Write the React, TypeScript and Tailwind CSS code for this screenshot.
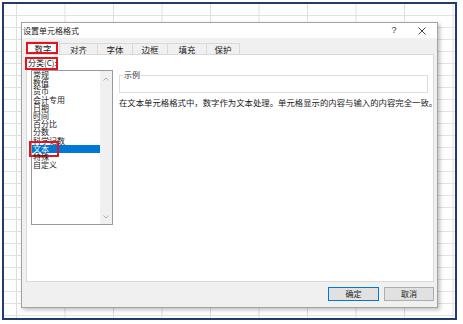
import React from "react";

const FONT = { fontFamily: '"Noto Sans CJK SC", "Noto Sans", sans-serif' };

const tabs: { label: string; w: string }[] = [
  { label: "数字", w: "w-[34px]" },
  { label: "对齐", w: "w-[38px]" },
  { label: "字体", w: "w-[35px]" },
  { label: "边框", w: "w-[35px]" },
  { label: "填充", w: "w-[39px]" },
  { label: "保护", w: "w-[33px]" },
];

const items = [
  "常规",
  "数值",
  "货币",
  "会计专用",
  "日期",
  "时间",
  "百分比",
  "分数",
  "科学记数",
  "文本",
  "特殊",
  "自定义",
];

function Chevron({ up }: { up?: boolean }) {
  return (
    <svg width="6" height="4" viewBox="0 0 6 4" className="block">
      <path
        d={up ? "M0.5 3.5 L3 1 L5.5 3.5" : "M0.5 0.5 L3 3 L5.5 0.5"}
        fill="none"
        stroke="#a6a6a6"
        strokeWidth="0.9"
      />
    </svg>
  );
}

export default function App() {
  return (
    <div className="w-[463px] h-[324px] bg-white pt-[2px] pl-[2px] overflow-hidden text-[#1a1a1a]" style={FONT}>
      <div className="w-[455px] h-[318px] border-2 border-[#1f3b6f] pl-[17px] pt-[18px] bg-white bg-[linear-gradient(to_right,#dedede_1px,transparent_1px),linear-gradient(to_bottom,#e2e2e2_1px,transparent_1px)] bg-[size:48.5px_100%,100%_12px] bg-[position:12px_0,0_11px]">
        {/* dialog */}
        <div className="w-[417px] h-[286px] border border-[#a3a3a3] bg-[#f0f0f0] shadow-[2px_2px_4px_rgba(0,0,0,0.25)] flex flex-col">
          {/* title bar */}
          <div className="h-[15px] bg-white flex items-center pl-[1px]">
            <span className="text-[8px] leading-[8px] flex-1">设置单元格格式</span>
            <span className="text-[9px] leading-[9px] text-[#333] w-[10px] text-center mr-[19px]" style={{ fontFamily: '"Liberation Sans", sans-serif' }}>?</span>
            <svg width="8" height="8" viewBox="0 0 8 8" className="mr-[11px]">
              <path d="M0.5 0.5 L7.5 7.5 M7.5 0.5 L0.5 7.5" stroke="#333" strokeWidth="0.9" />
            </svg>
          </div>
          {/* tabs */}
          <div className="h-[16px] pl-[4px] flex items-end">
            {tabs.map((t, i) => (
              <div
                key={t.label}
                className={
                  i === 0
                    ? `relative ${t.w} h-[13px] bg-white border border-b-0 border-[#d9d9d9] flex items-center justify-center text-[8.5px] leading-[9px]`
                    : `relative ${t.w} h-[11px] border border-b-0 border-l-0 border-[#d9d9d9] flex items-center justify-center text-[8.5px] leading-[9px]`
                }
              >
                {t.label}
                {i === 0 && (
                  <div className="absolute left-[-1px] top-[0px] w-[32px] h-[12px] border-2 border-[#e3141b]" />
                )}
              </div>
            ))}
          </div>
          {/* panel */}
          <div className="ml-[4px] w-[408px] h-[228px] bg-white border border-[#d9d9d9] flex">
            <div className="pl-[1px] flex flex-col">
              <div className="relative h-[15px] leading-[15px] text-[8px]">
                分类(C):
                <div className="absolute left-[-3px] top-[2px] w-[33px] h-[13px] border-2 border-[#e3141b]" />
              </div>
              <div className="ml-[3px] w-[82px] h-[155px] border border-[#9a9a9a] flex">
                <div className="flex-1 flex flex-col">
                  {items.map((it) => (
                    <div
                      key={it}
                      className={
                        it === "文本"
                          ? "relative h-[8.2px] leading-[8.2px] text-[8px] pl-[1px] bg-[#0078d7] text-white whitespace-nowrap"
                          : "relative h-[8.2px] leading-[8.2px] text-[8px] pl-[1px] whitespace-nowrap"
                      }
                    >
                      {it}
                      {it === "文本" && (
                        <div className="absolute left-[-3px] top-[-4px] w-[30px] h-[16px] border-2 border-[#e3141b]" />
                      )}
                    </div>
                  ))}
                </div>
                <div className="w-[12px] bg-[#f0f0f0] flex flex-col items-center justify-between pt-[6px] pb-[5px]">
                  <Chevron up />
                  <Chevron />
                </div>
              </div>
            </div>
            <div className="ml-[6px] flex flex-col">
              <div className="relative mt-[20px] w-[309px] h-[18px] border border-[#dcdcdc]">
                <span className="absolute left-[3px] top-[-6px] bg-white px-[1px] text-[8px] leading-[10px] text-[#333]">
                  示例
                </span>
              </div>
              <div className="mt-[4px] text-[8.4px] leading-[10px] whitespace-nowrap">
                在文本单元格格式中，数字作为文本处理。单元格显示的内容与输入的内容完全一致。
              </div>
            </div>
          </div>
          {/* footer */}
          <div className="flex-1 flex justify-end items-start pt-[5px] pr-[3px] gap-[5px]">
            <div className="w-[51px] h-[14px] border border-[#0078d7] bg-[#e1e1e1] flex items-center justify-center text-[8px] leading-[8px]">
              确定
            </div>
            <div className="w-[50px] h-[14px] border border-[#adadad] bg-[#e1e1e1] flex items-center justify-center text-[8px] leading-[8px]">
              取消
            </div>
          </div>
        </div>
      </div>
    </div>
  );
}
